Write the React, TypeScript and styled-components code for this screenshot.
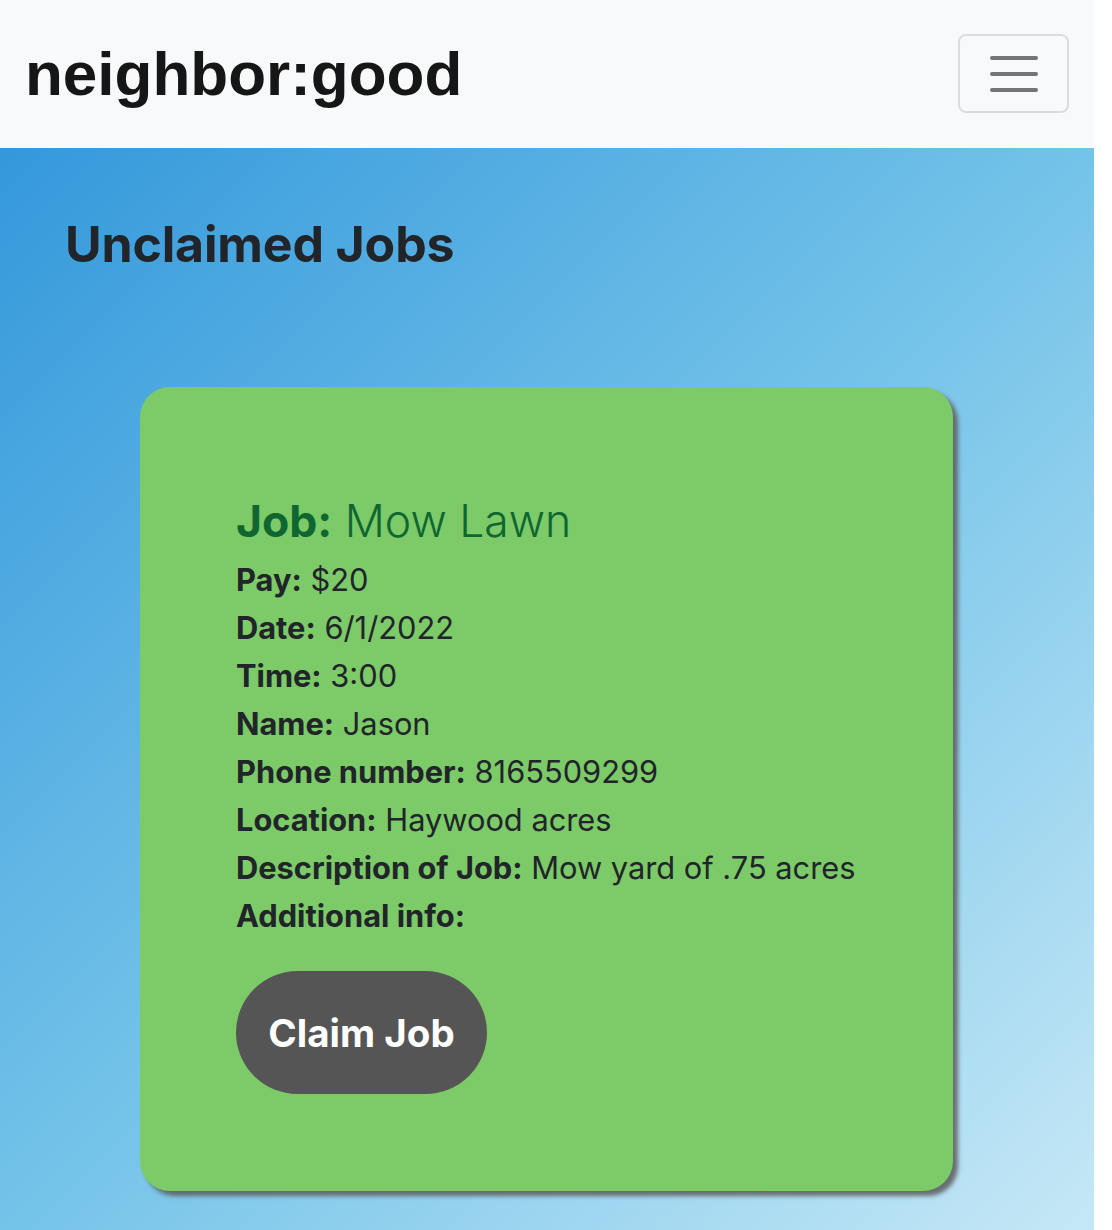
import React from "react";
import styled, { createGlobalStyle } from "styled-components";

const GlobalStyle = createGlobalStyle`
  html, body { margin: 0; padding: 0; }
  body {
    font-family: Inter, "Noto Sans", sans-serif;
    color: #212529;
    background: #ffffff;
  }
  * { box-sizing: border-box; }
`;

const Page = styled.div`
  width: 1094px;
  display: flex;
  flex-direction: column;
  min-height: 1230px;
`;

const NavBar = styled.header`
  height: 148px;
  background: #f8f9fa;
  display: flex;
  align-items: center;
  justify-content: space-between;
  padding: 0 25px 0 25px;
`;

const Brand = styled.a`
  font-family: "Liberation Sans", Arial, sans-serif;
  font-weight: 700;
  font-size: 62px;
  color: #161616;
  text-decoration: none;
  margin-top: -2px;
`;

const Toggler = styled.button`
  width: 111px;
  height: 79px;
  margin-top: -1px;
  border: 2px solid #dcdcdc;
  border-radius: 8px;
  background: transparent;
  display: flex;
  flex-direction: column;
  align-items: center;
  justify-content: center;
  gap: 12px;
  padding: 0;
`;

const TogglerBar = styled.span`
  display: block;
  width: 48px;
  height: 4px;
  border-radius: 2px;
  background: #757575;
`;

const Main = styled.main`
  flex: 1;
  background: linear-gradient(to bottom right, #3498db 0%, #74c3e9 50%, #c6e8f6 100%);
  padding: 66px 0 40px;
`;

const Heading = styled.h1`
  margin: 0 0 0 65px;
  font-size: 50px;
  line-height: 60px;
  font-weight: 700;
  color: #212529;
  letter-spacing: -0.15px;
`;

const CardWrap = styled.div`
  display: flex;
  justify-content: center;
  margin-top: 113px;
`;

const Card = styled.section`
  width: 813px;
  margin-left: -1px;
  background: #7cca68;
  border-radius: 30px;
  box-shadow: 5px 5px 4px rgba(90, 90, 90, 0.85);
  padding: 105px 40px 97px 96px;
  display: flex;
  flex-direction: column;
  align-items: flex-start;
`;

const JobTitle = styled.h2`
  margin: 0 0 6px;
  font-size: 44.5px;
  line-height: 58px;
  font-weight: 300;
  color: #0f6630;
  b { font-weight: 700; }
`;

const DetailList = styled.div`
  display: flex;
  flex-direction: column;
`;

const Detail = styled.p`
  margin: 0;
  font-size: 30.8px;
  line-height: 48px;
  font-weight: 400;
  white-space: nowrap;
  color: #212529;
  b { font-weight: 700; }
`;

const ClaimButton = styled.button`
  margin-top: 31px;
  width: 251px;
  height: 123px;
  border: none;
  border-radius: 62px;
  background: #555555;
  color: #ffffff;
  font-family: Inter, sans-serif;
  font-weight: 700;
  font-size: 38.5px;
  padding: 0;
`;

const details: [string, string][] = [
  ["Pay:", "$20"],
  ["Date:", "6/1/2022"],
  ["Time:", "3:00"],
  ["Name:", "Jason"],
  ["Phone number:", "8165509299"],
  ["Location:", "Haywood acres"],
  ["Description of Job:", "Mow yard of .75 acres"],
  ["Additional info:", ""],
];

export default function App() {
  return (
    <Page>
      <GlobalStyle />
      <NavBar>
        <Brand href="#">neighbor:good</Brand>
        <Toggler aria-label="Toggle navigation">
          <TogglerBar />
          <TogglerBar />
          <TogglerBar />
        </Toggler>
      </NavBar>
      <Main>
        <Heading>Unclaimed Jobs</Heading>
        <CardWrap>
          <Card>
            <JobTitle>
              <b>Job:</b> Mow Lawn
            </JobTitle>
            <DetailList>
              {details.map(([label, value]) => (
                <Detail key={label}>
                  <b>{label}</b> {value}
                </Detail>
              ))}
            </DetailList>
            <ClaimButton>Claim Job</ClaimButton>
          </Card>
        </CardWrap>
      </Main>
    </Page>
  );
}
